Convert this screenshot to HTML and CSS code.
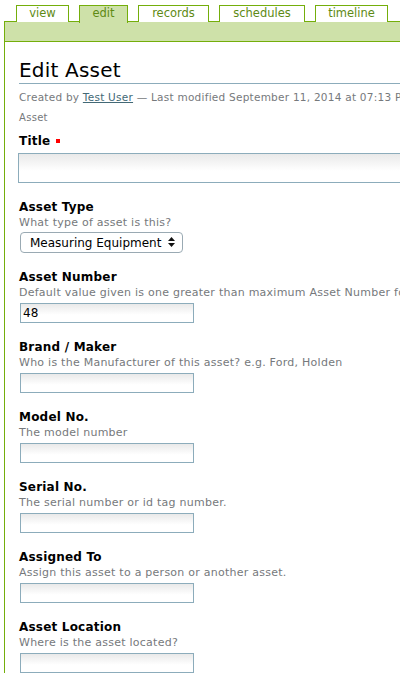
FILE: index.html
```html
<!DOCTYPE html>
<html>
<head>
<meta charset="utf-8">
<link rel="stylesheet" href="styles.css">
</head>
<body>
<ul class="tabs">
  <li class="tab">view</li>
  <li class="tab selected">edit</li>
  <li class="tab">records</li>
  <li class="tab">schedules</li>
  <li class="tab">timeline</li>
</ul>
<div class="content">
  <div class="bar"></div>
  <div class="main">
    <h1 class="title">Edit Asset</h1>
    <div class="byline">Created by <a href="#" class="author">Test User</a> — Last modified September 11, 2014 at 07:13 PM</div>
    <div class="type">Asset</div>

    <div class="field field-title">
      <label class="label">Title <span class="required"></span></label>
      <input class="text wide" type="text">
    </div>

    <div class="field field-type">
      <label class="label">Asset Type</label>
      <div class="help">What type of asset is this?</div>
      <div class="select-wrap">
        <select class="select"><option>Measuring Equipment</option></select>
        <svg class="arrows" width="7" height="10" viewBox="0 0 7 10"><path d="M3.5 0 L7 4 L0 4 Z M3.5 10 L7 6 L0 6 Z" fill="#111"/></svg>
      </div>
    </div>

    <div class="field">
      <label class="label">Asset Number</label>
      <div class="help">Default value given is one greater than maximum Asset Number found</div>
      <input class="text" type="text" value="48">
    </div>

    <div class="field">
      <label class="label">Brand / Maker</label>
      <div class="help">Who is the Manufacturer of this asset? e.g. Ford, Holden</div>
      <input class="text" type="text">
    </div>

    <div class="field">
      <label class="label">Model No.</label>
      <div class="help">The model number</div>
      <input class="text" type="text">
    </div>

    <div class="field">
      <label class="label">Serial No.</label>
      <div class="help">The serial number or id tag number.</div>
      <input class="text" type="text">
    </div>

    <div class="field">
      <label class="label">Assigned To</label>
      <div class="help">Assign this asset to a person or another asset.</div>
      <input class="text" type="text">
    </div>

    <div class="field">
      <label class="label">Asset Location</label>
      <div class="help">Where is the asset located?</div>
      <input class="text" type="text">
    </div>
  </div>
</div>
</body>
</html>
```
FILE: styles.css
```css
html, body {
  margin: 0;
  padding: 0;
  background: #fff;
  overflow: hidden;
}
body {
  font-family: "DejaVu Sans", sans-serif;
  color: #000;
  width: 400px;
}
.tabs {
  list-style: none;
  margin: 0;
  padding: 5px 0 0 16px;
  display: flex;
  gap: 10px;
  height: 16px;
  white-space: nowrap;
}
.tab {
  box-sizing: border-box;
  height: 17px;
  border: 1px solid #74ae0b;
  border-bottom: none;
  background: #fff;
  color: #5e8a14;
  font-size: 11.5px;
  line-height: 15px;
  text-align: center;
  position: relative;
  z-index: 1;
}
.tab:nth-child(1) { width: 53px; }
.tab:nth-child(2) { width: 49px; }
.tab:nth-child(3) { width: 71px; }
.tab:nth-child(4) { width: 86px; }
.tab:nth-child(5) { width: 73px; }
.tab.selected {
  background: #cee1a9;
  height: 18px;
}
.content {
  margin-left: 4px;
  border-left: 1px solid #74ae0b;
  width: 600px;
}
.bar {
  height: 19px;
  background: #cee1a9;
  border-top: 1px solid #74ae0b;
  border-bottom: 1px solid #74ae0b;
}
.main {
  padding: 15px 0 0 14px;
}
.title {
  margin: 0;
  font-weight: normal;
  font-size: 20px;
  line-height: 26px;
  border-bottom: 1px solid #8cacbb;
  width: 600px;
  letter-spacing: 0.2px;
}
.byline {
  color: #76797c;
  font-size: 10.5px;
  line-height: 13px;
  margin-top: 7px;
  white-space: nowrap;
  letter-spacing: 0.25px;
}
.author {
  color: #436976;
  text-decoration: underline;
}
.type {
  color: #76797c;
  font-size: 10px;
  line-height: 13px;
  margin-top: 7px;
  letter-spacing: 0.3px;
}
.field {
  margin-top: 17px;
}
.field-title {
  margin-top: 10px;
}
.field-type {
  margin-top: 17px;
}
.label {
  display: block;
  font-weight: bold;
  font-size: 12px;
  line-height: 15px;
  letter-spacing: 0.2px;
}
.required {
  display: inline-block;
  width: 4px;
  height: 4px;
  background: #f00;
  vertical-align: 2px;
  margin-left: 1px;
}
.help {
  color: #76797c;
  font-size: 11px;
  line-height: 14px;
  margin-top: 1px;
  white-space: nowrap;
  letter-spacing: 0.25px;
}
.text {
  display: block;
  box-sizing: border-box;
  width: 174px;
  height: 20px;
  margin: 3px 0 0 1px;
  border: 1px solid #8cacbb;
  background: linear-gradient(#e9e9e9, #fff 60%);
  font-family: "DejaVu Sans", sans-serif;
  font-size: 12px;
  color: #000;
  padding: 0 2px;
  outline: none;
}
.wide {
  width: 600px;
  height: 30px;
  margin: 4px 0 0 -1px;
}
.select-wrap {
  position: relative;
  width: 163px;
  margin: 2px 0 2px 1px;
}
.select {
  -webkit-appearance: none;
  appearance: none;
  display: block;
  box-sizing: border-box;
  width: 163px;
  height: 21px;
  border: 1px solid #9aaab3;
  border-radius: 4px;
  background: #fff;
  font-family: "DejaVu Sans", sans-serif;
  font-size: 12px;
  color: #000;
  padding: 0 0 0 9px;
}
.arrows {
  position: absolute;
  right: 8px;
  top: 5px;
}
```
